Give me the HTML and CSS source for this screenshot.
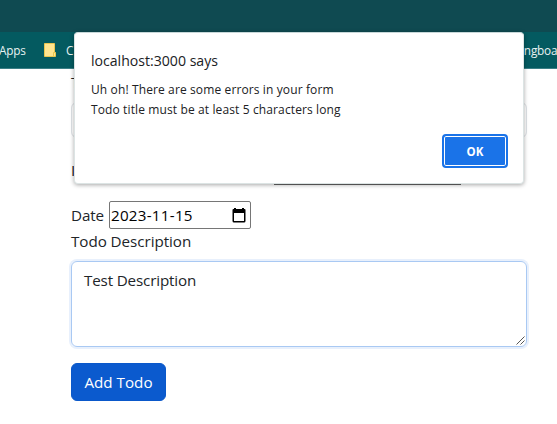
FILE: index.html
```html
<!DOCTYPE html>
<html lang="en">
<head>
<meta charset="utf-8">
<title>Todo</title>
<link rel="stylesheet" href="styles.css">
</head>
<body>
<header class="tabstrip"></header>
<nav class="bookmarks">
  <span class="apps">Apps</span>
  <svg class="folder" width="12" height="14" viewBox="0 0 12 14"><path d="M.5.5h10v9h1v4H.5z" fill="#ffe48f" stroke="#eac54f"/><path d="M9.500 13v-3.500h2" fill="none" stroke="#eac54f"/></svg>
  <span>C</span>
  <span class="last">ngboar</span>
</nav>
<main class="form">
  <label class="title-label"><span class="t">T</span></label>
  <div class="title-input"></div>
  <div class="mid-row"><span class="t">I</span><div class="mid-input"></div></div>
  <div class="date-row">
    <label class="t date-label">Date</label>
    <div class="date-input"><span class="date-value">2023-11-15</span>
      <svg width="14" height="15" viewBox="0 0 14 15"><path d="M2 0h2v1h6V0h2v1h.5q1 0 1 1v11q0 1.500-1.500 1.500H2Q.5 14.500.5 13V2q0-1 1-1H2zM2 5v8h10V5z" fill="#000" fill-rule="evenodd"/></svg>
    </div>
  </div>
  <label class="desc-label"><span class="t desc-text">Todo Description</span></label>
  <div class="textarea"><span class="t area-text">Test Description</span>
    <svg class="grip" width="9" height="9" viewBox="0 0 9 9"><path d="M.5 8.500l8-8M4.500 8.500l4-4" stroke="#555" fill="none"/></svg>
  </div>
  <button class="add"><span class="add-text">Add Todo</span></button>
</main>
<section class="dialog">
  <h1><span class="heading-text">localhost:3000 says</span></h1>
  <p><span class="line-one">Uh oh! There are some errors in your form</span><br><span class="line-two">Todo title must be at least 5 characters long</span></p>
  <button class="ok">OK</button>
</section>
</body>
</html>
```
FILE: styles.css
```css
* { box-sizing: border-box; }
body {
  margin: 0;
  width: 557px;
  height: 424px;
  overflow: hidden;
  position: relative;
  background: #fff;
  color: #212529;
  font-family: "Open Sans", "Noto Sans", sans-serif;
  font-size: 15.2px;
  line-height: 24px;
}
.tabstrip { height: 32px; background: #0f4a51; }
.bookmarks {
  height: 37px;
  display: flex;
  align-items: center;
  background: #045a60;
  border-bottom: 1px solid #3b7f86;
  color: #e8f2f2;
  font-size: 11.8px;
  letter-spacing: -0.2px;
  white-space: nowrap;
}
.apps { width: 44px; margin-left: -1px; }
.folder { margin: 0 10px 0 1px; }
.last { margin-left: auto; margin-right: -5px; }
.form {
  margin-left: 71px;
  width: 456px;
  display: flex;
  flex-direction: column;
  align-items: flex-start;
}
.t { letter-spacing: -0.1px; white-space: nowrap; }
.title-label { height: 33px; padding-top: 1px; }
.title-input {
  width: 456px;
  height: 36px;
  border: 1px solid #dee2e6;
  border-radius: 6px;
}
.mid-row {
  width: 456px;
  height: 47px;
  margin-top: 16px;
  display: flex;
}
.mid-row .t { width: 5px; padding-top: 4px; }
.mid-input {
  width: 187px;
  height: 31px;
  margin-left: 198px;
  border: 1px solid #666;
}
.date-row { display: flex; height: 28px; align-items: center; }
.date-label { width: 38px; }
.date-value { letter-spacing: 0.25px; margin-left: -1px; white-space: nowrap; }
.date-input {
  width: 142px;
  height: 28px;
  border: 1px solid #767676;
  border-radius: 2px;
  display: flex;
  align-items: center;
  justify-content: space-between;
  padding: 0 4px 0 2px;
  color: #000;
}
.desc-label { height: 32px; }
.desc-text { letter-spacing: -0.05px; }
.area-text { letter-spacing: -0.15px; }
.textarea {
  position: relative;
  width: 456px;
  height: 86px;
  padding: 6px 12px;
  border: 1px solid #a9c9f3;
  border-radius: 6px;
  box-shadow: 0 0 0 2px #e8f0fc;
}
.grip { position: absolute; right: 1px; bottom: 1px; }
.add {
  width: 95px;
  height: 38px;
  margin-top: 16px;
  padding: 0;
  border: 1px solid #0a58ca;
  border-radius: 6px;
  background: #0b5ace;
  color: #fff;
  font: 15.2px "Open Sans", "Noto Sans", sans-serif;
}
.dialog {
  position: absolute;
  left: 74px;
  top: 32px;
  width: 450px;
  height: 152px;
  padding: 17px 15px 15px 16px;
  background: #fff;
  border-radius: 4px;
  border: 1px solid #dce4e4;
  border-top-color: #c8d8d9;
  box-shadow: 0 1px 4px rgba(0, 0, 0, .35);
  display: flex;
  flex-direction: column;
}
.dialog h1 { margin: 0; font-size: 14.1px; line-height: 22px; font-weight: 400; color: #202124; }
.dialog p { margin: 8px 0 0; font-size: 12px; line-height: 20px; letter-spacing: 0.12px; color: #202124; }
.ok {
  width: 66px;
  height: 34px;
  margin: auto 0 0 auto;
  border: 2px solid #1a73e8;
  border-radius: 4px;
  box-shadow: inset 0 0 0 1px #fff;
  background: #1a73e8;
  color: #fff;
  font: 700 11.5px "Open Sans", "Noto Sans", sans-serif;
}
```
